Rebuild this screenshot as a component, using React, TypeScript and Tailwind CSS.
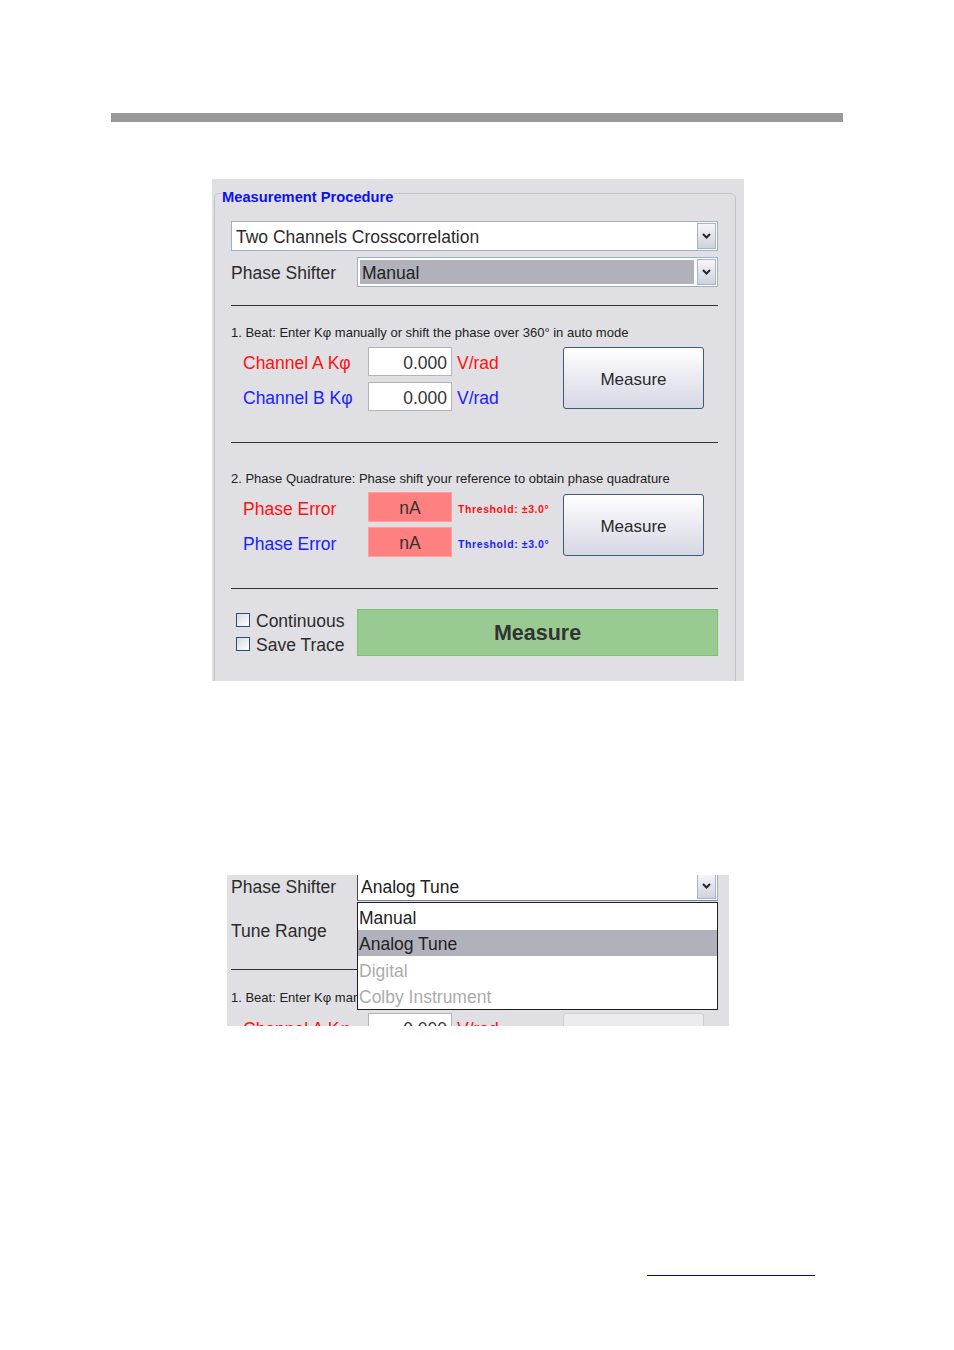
import React from 'react';

function ComboArrow() {
  return (
    <div className="m-px flex h-[calc(100%-2px)] w-[19px] items-center justify-center border border-[#a7b4c6] bg-linear-to-b from-[#f6f6fa] to-[#cfd1dd]">
      <svg width="9" height="6" viewBox="0 0 9 6">
        <path d="M1 1l3.5 3.5L8 1" fill="none" stroke="#262626" strokeWidth="2" />
      </svg>
    </div>
  );
}

function Separator({ className }: { className: string }) {
  return <div className={`h-px bg-[#333333] ${className}`} />;
}

function SmallButton({ disabled }: { disabled?: boolean }) {
  if (disabled) {
    return (
      <div className="h-[62px] w-[141px] rounded-[3px] border border-[#cfcfd3] bg-[#ececee]" />
    );
  }
  return (
    <div className="flex h-[62px] w-[141px] items-center justify-center rounded-[3px] border border-[#3f5a76] bg-linear-to-b from-[#ffffff] to-[#d5d7e4] pt-[4px] text-[17px] text-[#2a2a2a]">
      Measure
    </div>
  );
}

function ValueRow({ label, color, value, unit }: { label: string; color: string; value: string; unit: string }) {
  return (
    <div className="flex h-[29px] items-center">
      <div className={`w-[137px] pl-[12px] pt-[4px] text-[17.5px] ${color}`}>{label}</div>
      <div className="flex h-full w-[84px] items-center justify-end border border-[#b4b4b8] bg-white pr-[4px] pt-[3px] text-[17.5px] text-[#333]">
        {value}
      </div>
      <div className={`ml-[5px] pt-[4px] text-[17.5px] ${color}`}>{unit}</div>
    </div>
  );
}

function ErrorRow({ color }: { color: string }) {
  return (
    <div className="flex h-[30px] items-center">
      <div className={`w-[137px] pl-[12px] pt-[4px] text-[17.5px] ${color}`}>Phase Error</div>
      <div className="flex h-full w-[84px] items-center justify-center border border-[#ff9c9c] bg-[#ff8080] pt-[2px] text-[17.5px] text-[#333]">
        nA
      </div>
      <div className={`ml-[6px] pt-[5px] text-[10.5px] font-bold tracking-[0.6px] ${color}`}>Threshold: ±3.0°</div>
    </div>
  );
}

function CheckBox({ label }: { label: string }) {
  return (
    <div className="flex h-[24px] items-center">
      <div className="h-[14px] w-[14px] border border-[#264f7a] bg-linear-to-br from-[#d9d9dd] to-[#ffffff]" />
      <span className="ml-[6px] pt-[2px] text-[17.5px] text-[#2b2b2b]">{label}</span>
    </div>
  );
}

function MainPanel() {
  return (
    <div className="ml-[212px] mt-[57px] h-[502px] w-[532px] overflow-hidden bg-[#e0dfe3] pl-[2px] pt-[14px]">
      <div className="relative h-[540px] w-[522px] rounded-[5px] border border-[#c3c3c8] pl-[16px] pr-[17px] pt-[27px]">
        <span className="absolute -top-[6px] left-[6px] bg-[#e0dfe3] px-px text-[14.7px] font-bold leading-[18px] text-[#0b12ee]">
          Measurement Procedure
        </span>

        <div className="flex h-[30px] items-center border border-[#9fb0c6] bg-white">
          <span className="flex-1 pl-[4px] pt-[2px] text-[17.5px] text-[#2b2b2b]">Two Channels Crosscorrelation</span>
          <ComboArrow />
        </div>

        <div className="mt-[6px] flex items-center">
          <div className="w-[126px] pt-[2px] text-[17.5px] text-[#2b2b2b]">Phase Shifter</div>
          <div className="flex h-[30px] flex-1 items-center border border-[#9fb0c6] bg-white">
            <div className="m-[2px] flex h-[calc(100%-4px)] flex-1 items-center bg-[#b0b1bb] pl-[2px] pt-[2px] text-[17.5px] text-[#222]">
              Manual
            </div>
            <ComboArrow />
          </div>
        </div>

        <Separator className="mt-[18px]" />

        <p className="mt-[19px] text-[13px] leading-[16px] text-[#222]">
          1. Beat: Enter Kφ manually or shift the phase over 360° in auto mode
        </p>

        <div className="mt-[6px] flex items-start">
          <div className="flex w-[332px] flex-col gap-[6px]">
            <ValueRow label="Channel A Kφ" color="text-[#ff1010]" value="0.000" unit="V/rad" />
            <ValueRow label="Channel B Kφ" color="text-[#1a22ff]" value="0.000" unit="V/rad" />
          </div>
          <SmallButton />
        </div>

        <Separator className="mt-[31px]" />

        <p className="mt-[28px] text-[13px] leading-[16px] text-[#222]">
          2. Phase Quadrature: Phase shift your reference to obtain phase quadrature
        </p>

        <div className="mt-[5px] flex items-center">
          <div className="flex w-[332px] flex-col gap-[5px]">
            <ErrorRow color="text-[#ff1010]" />
            <ErrorRow color="text-[#1a22ff]" />
          </div>
          <SmallButton />
        </div>

        <Separator className="mt-[31px]" />

        <div className="mt-[19px] flex items-center">
          <div className="flex w-[126px] flex-col pl-[5px]">
            <CheckBox label="Continuous" />
            <CheckBox label="Save Trace" />
          </div>
          <div className="flex h-[47px] flex-1 items-center justify-center border border-[#80bf77] bg-[#99ca91] pt-[2px] text-[21.5px] font-bold text-[#333]">
            Measure
          </div>
        </div>
      </div>
    </div>
  );
}

function DropdownPanel() {
  const items = [
    { label: 'Manual', state: 'normal' },
    { label: 'Analog Tune', state: 'selected' },
    { label: 'Digital', state: 'disabled' },
    { label: 'Colby Instrument', state: 'disabled' },
  ];
  return (
    <div className="ml-[227px] mt-[194px] h-[151px] w-[502px] overflow-hidden bg-[#e0dfe3] pl-[4px] pr-[11px]">
      <div className="relative -mt-[4px]">
        <div className="flex items-center">
          <div className="w-[126px] pt-[2px] text-[17.5px] text-[#2b2b2b]">Phase Shifter</div>
          <div className="flex h-[30px] flex-1 items-center border border-l-[#4a4a4a] border-b-[#6f86a3] border-t-[#9fb0c6] border-r-[#9fb0c6] bg-white">
            <span className="flex-1 pl-[3px] pt-[2px] text-[17.5px] text-[#222]">Analog Tune</span>
            <ComboArrow />
          </div>
        </div>

        <div className="mt-[19px] pt-[1px] text-[17.5px] leading-[20px] text-[#2b2b2b]">Tune Range</div>

        <Separator className="mt-[28px]" />

        <p className="mt-[20px] text-[13px] leading-[16px] text-[#222]">
          1. Beat: Enter Kφ manually or shift the phase over 360° in auto mode
        </p>

        <div className="mt-[7px] flex items-start">
          <div className="w-[332px]">
            <ValueRow label="Channel A Kφ" color="text-[#ff1010]" value="0.000" unit="V/rad" />
          </div>
          <SmallButton disabled />
        </div>

        <div className="absolute left-[126px] right-0 top-[31px] border border-[#1e1e1e] bg-white">
          {items.map((it) => (
            <div
              key={it.label}
              className={
                it.state === 'selected'
                  ? 'flex h-[26.5px] items-center bg-[#b0b1bb] pl-px pt-[3px] text-[17.5px] text-[#222]'
                  : it.state === 'disabled'
                  ? 'flex h-[26.5px] items-center pl-px pt-[3px] text-[17.5px] text-[#acacac]'
                  : 'flex h-[26.5px] items-center pl-px pt-[3px] text-[17.5px] text-[#222]'
              }
            >
              {it.label}
            </div>
          ))}
        </div>
      </div>
    </div>
  );
}

export default function App() {
  return (
    <div className="h-[1350px] w-[954px] bg-white pt-[113px] font-['Liberation_Sans',Arial,sans-serif]">
      <div className="mx-[111px] h-[9px] bg-[#999999]" />
      <MainPanel />
      <DropdownPanel />
      <div className="ml-[647px] mt-[249px] h-px w-[168px] bg-[#0000cc]" />
    </div>
  );
}
